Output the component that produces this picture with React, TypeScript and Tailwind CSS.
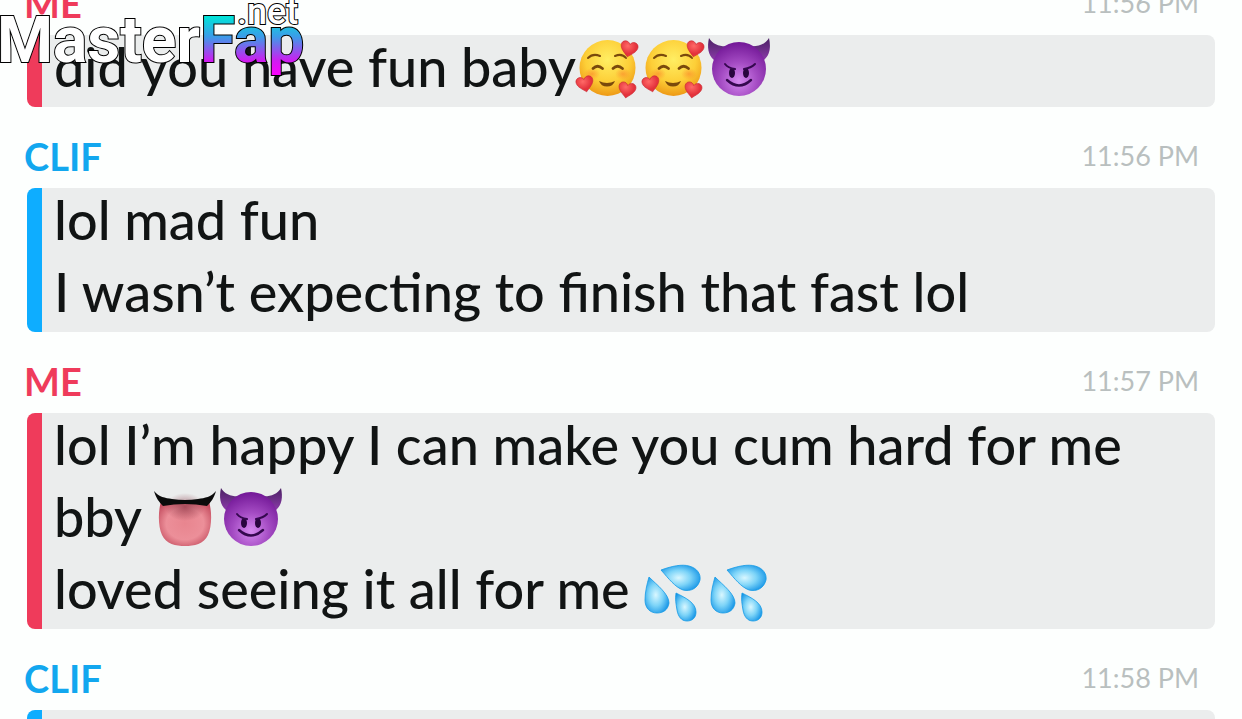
import type { ReactNode } from 'react';

const emojiClass = 'mr-1 mt-[7px] inline-block h-[62px] w-[62px] overflow-visible align-top';

function Heart({ x, y, r }: { x: number; y: number; r: number }) {
  return (
    <path
      transform={`translate(${x} ${y}) rotate(${r})`}
      d="M0 8C-3 5-8.500 1.500-8.500-3C-8.500-8-2-9 0-4.500C2-9 8.500-8 8.500-3C8.500 1.500 3 5 0 8Z"
      fill="url(#heart)"
      stroke="#c92a32"
      strokeWidth="0.6"
    />
  );
}

function HeartsFace() {
  return (
    <svg className={emojiClass} viewBox="0 0 62 62" role="img" aria-label="smiling face with hearts">
      <circle cx="31.500" cy="30" r="28" fill="url(#face)" />
      <ellipse cx="16" cy="36" rx="8" ry="6" fill="url(#blush)" />
      <ellipse cx="47" cy="36" rx="8" ry="6" fill="url(#blush)" />
      <g fill="none" stroke="#7a4a0c" strokeLinecap="round" strokeWidth="2">
        <path d="M12 20Q17 15 24 18" />
        <path d="M39 18Q46 15 50 20" />
        <path d="M17 30.500Q21.500 26 26.500 30.500" strokeWidth="2.800" />
        <path d="M37 30.500Q41.500 26 46.500 30.500" strokeWidth="2.800" />
      </g>
      <path d="M23 43Q31 47 39 43Q37 48.500 31 48.500Q25 48.500 23 43Z" fill="#7a4a0c" />
      <Heart x={53} y={11} r={12} />
      <Heart x={9} y={46} r={-12} />
      <Heart x={51} y={52} r={10} />
    </svg>
  );
}

function Devil() {
  return (
    <svg className={emojiClass} viewBox="0 0 62 62" role="img" aria-label="smiling face with horns">
      <path d="M1 0C-1 9 0 17 6 22L21 8C13 9 5 7 1 0Z" fill="url(#horn)" />
      <path d="M61 0C63 9 62 17 56 22L41 8C49 9 57 7 61 0Z" fill="url(#horn)" />
      <circle cx="31" cy="31" r="27" fill="url(#devil)" />
      <ellipse cx="24" cy="35" rx="3" ry="5" fill="#2a063f" />
      <ellipse cx="38" cy="35" rx="3" ry="5" fill="#2a063f" />
      <g fill="none" stroke="#35084f" strokeLinecap="round" strokeWidth="2">
        <path d="M17 26Q20 30 27 31" />
        <path d="M47 26Q43 30 36 31" />
        <path d="M19 42Q31 53 43 42" strokeWidth="2.400" />
      </g>
    </svg>
  );
}

function Tongue() {
  return (
    <svg className={emojiClass} viewBox="0 0 62 62" role="img" aria-label="tongue">
      <path d="M7 13Q31 18 55 13C58 24 58 38 54 47C50 56 40 58 31 58C22 58 12 56 8 47C4 38 4 24 7 13Z" fill="url(#tongue)" />
      <ellipse cx="31" cy="19" rx="20" ry="14" fill="url(#throat)" />
      <path d="M0 3C5 9 11 10 18 11Q31 13 44 11C51 10 57 9 62 3C60 10 57 14 53 18Q31 14 9 18C5 14 2 10 0 3Z" fill="#0b0b0b" />
    </svg>
  );
}

function Drops() {
  return (
    <svg className={emojiClass} viewBox="0 0 62 62" role="img" aria-label="sweat droplets">
      <g stroke="#149be6" strokeWidth="0.8">
        <path d="M18 10C29 6 39 4 46 6C54 8 58 14 57 20C55 28 48 32 40 30C32 27 26 19 18 10Z" fill="url(#drop)" />
        <path d="M6 17C14 25 26 34 26 43C25 50 20 53 14 53C7 53 2 48 2 40C2 32 4 24 6 17Z" fill="url(#drop)" />
        <path d="M33 33C43 38 53 43 53 52C53 58 49 61 44 61C38 61 35 56 34 50C33 44 32 39 33 33Z" fill="url(#drop)" />
      </g>
    </svg>
  );
}

function EmojiPaints() {
  return (
    <svg className="absolute h-0 w-0" aria-hidden="true">
      <defs>
        <radialGradient id="face" cx="0.5" cy="0.35" r="0.66">
          <stop offset="0" stopColor="#ffee63" />
          <stop offset="0.6" stopColor="#fdcf38" />
          <stop offset="1" stopColor="#ed9714" />
        </radialGradient>
        <radialGradient id="blush">
          <stop offset="0" stopColor="#fb7428" stopOpacity="0.5" />
          <stop offset="1" stopColor="#fb7428" stopOpacity="0" />
        </radialGradient>
        <radialGradient id="heart" cx="0.4" cy="0.3">
          <stop offset="0" stopColor="#ff6a67" />
          <stop offset="1" stopColor="#e4323c" />
        </radialGradient>
        <radialGradient id="devil" cx="0.5" cy="0.72" r="0.7">
          <stop offset="0" stopColor="#d68af0" />
          <stop offset="0.5" stopColor="#a34ac2" />
          <stop offset="1" stopColor="#751a99" />
        </radialGradient>
        <linearGradient id="horn" x1="0" y1="0" x2="0" y2="1">
          <stop offset="0" stopColor="#4b2164" />
          <stop offset="1" stopColor="#8a3aa8" />
        </linearGradient>
        <radialGradient id="tongue" cx="0.5" cy="0.5" r="0.6">
          <stop offset="0" stopColor="#e8858f" />
          <stop offset="0.6" stopColor="#ec8f99" />
          <stop offset="1" stopColor="#c44d5f" />
        </radialGradient>
        <radialGradient id="throat">
          <stop offset="0" stopColor="#7a2233" stopOpacity="0.6" />
          <stop offset="1" stopColor="#7a2233" stopOpacity="0" />
        </radialGradient>
        <radialGradient id="drop" cx="0.45" cy="0.5" r="0.6">
          <stop offset="0" stopColor="#d9f7ff" />
          <stop offset="0.5" stopColor="#7dd4f8" />
          <stop offset="1" stopColor="#1594e6" />
        </radialGradient>
      </defs>
    </svg>
  );
}

function Watermark() {
  return (
    <svg
      className="absolute left-0 top-0 h-[84px] w-[320px] font-[Roboto,sans-serif] font-bold"
      viewBox="0 0 320 84"
    >
      <defs>
        <linearGradient id="brand" gradientUnits="userSpaceOnUse" x1="0" y1="16" x2="0" y2="76">
          <stop offset="0" stopColor="#00e5d8" />
          <stop offset="0.35" stopColor="#3d9be9" />
          <stop offset="0.75" stopColor="#d01cf0" />
          <stop offset="1" stopColor="#ff00ff" />
        </linearGradient>
      </defs>
      <g stroke="#000" strokeWidth="2" paintOrder="stroke">
        <text x="-3" y="62" fontSize="64" fill="#fff">Master</text>
        <text x="200" y="62" fontSize="64" fill="url(#brand)">Fap</text>
        <text x="237" y="24" fontSize="36" fill="#fff" fontWeight="500">.net</text>
      </g>
    </svg>
  );
}

type MessageProps = {
  name: string;
  time: string;
  me?: boolean;
  children?: ReactNode;
};

function Message({ name, time, me, children }: MessageProps) {
  return (
    <article>
      <header className="flex h-[81px] items-center justify-between pl-6 pr-[43px] pt-4">
        <h2 className={`text-[38px] leading-10 font-bold ${me ? 'text-[#ef3b5b]' : 'text-[#12a7ef]'}`}>{name}</h2>
        <time className="text-[27px] leading-10 text-[#b9bfbf]">{time}</time>
      </header>
      <div
        className={`mx-[27px] flow-root min-h-[72px] rounded-lg border-l-[15px] bg-[#ebeded] pl-3 ${
          me ? 'border-[#ef3b5b]' : 'border-[#0eadff]'
        }`}
      >
        <div className="-mt-1 mb-1 text-[54px] leading-[72px] font-medium text-[#111414]">{children}</div>
      </div>
    </article>
  );
}

export default function App() {
  return (
    <main className="relative flow-root h-screen overflow-hidden bg-[#fdfffe] font-[Lato,sans-serif]">
      <EmojiPaints />
      <div className="-mt-[46px]">
        <Message name="ME" time="11:56 PM" me>
          <p>
            did you have fun baby
            <HeartsFace />
            <HeartsFace />
            <Devil />
          </p>
        </Message>
        <Message name="CLIF" time="11:56 PM">
          <p>lol mad fun</p>
          <p>I wasn’t expecting to finish that fast lol</p>
        </Message>
        <Message name="ME" time="11:57 PM" me>
          <p>
            lol I’m happy I can make you cum hard for me
            <br />
            bby <Tongue />
            <Devil />
          </p>
          <p>
            loved seeing it all for me <Drops />
            <Drops />
          </p>
        </Message>
        <Message name="CLIF" time="11:58 PM" />
      </div>
      <Watermark />
    </main>
  );
}
